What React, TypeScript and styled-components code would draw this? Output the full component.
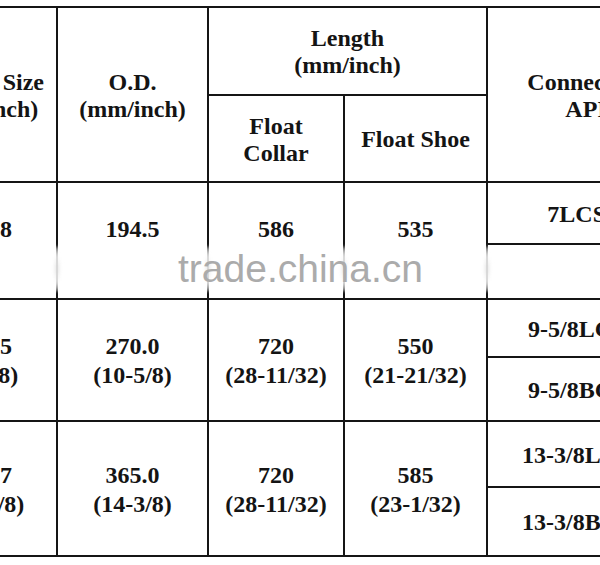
import styled, { createGlobalStyle } from "styled-components";

const GlobalStyle = createGlobalStyle`
  html, body {
    margin: 0;
    padding: 0;
    background: #ffffff;
    overflow: hidden;
  }
`;

const Page = styled.div`
  position: relative;
  width: 600px;
  height: 565px;
  overflow: hidden;
  background: #ffffff;
  padding-top: 6px;
  box-sizing: border-box;
`;

// the black background shows through the gaps as the ruled lines
const Sheet = styled.div`
  display: grid;
  grid-template-columns: 142px 149px 134px 141px 196px;
  grid-template-rows: 86px 85px 60px 53px 56px 62px 64px 67px;
  gap: 2px;
  padding: 2px;
  width: max-content;
  margin-left: -88px;
  background: #151515;
`;

const Cell = styled.div<{
  $col: number;
  $row: number;
  $colSpan?: number;
  $rowSpan?: number;
  $lift?: number;
  $leading?: number;
}>`
  grid-column: ${(p) => p.$col} / span ${(p) => p.$colSpan ?? 1};
  grid-row: ${(p) => p.$row} / span ${(p) => p.$rowSpan ?? 1};
  background: #ffffff;
  display: flex;
  flex-direction: column;
  align-items: center;
  justify-content: center;
  padding-top: 2px;
  padding-bottom: ${(p) => p.$lift ?? 0}px;
  font-family: "Liberation Serif", "Times New Roman", serif;
  font-weight: 700;
  font-size: 24px;
  line-height: ${(p) => p.$leading ?? 27}px;
  color: #141414;
  text-align: center;
  white-space: nowrap;
`;

const Watermark = styled.div`
  position: absolute;
  left: 178px;
  top: 249px;
  font-family: "Liberation Sans", Arial, sans-serif;
  font-size: 39px;
  line-height: 1;
  color: #ababab;
  pointer-events: none;
`;

const Smudge = styled.div<{ $x: number }>`
  position: absolute;
  left: ${(p) => p.$x - 6}px;
  top: 246px;
  width: 12px;
  height: 46px;
  border-radius: 50%;
  background: radial-gradient(ellipse at center, rgba(225, 225, 225, 0.95) 0%, rgba(255, 255, 255, 0.85) 45%, rgba(255, 255, 255, 0) 100%);
  filter: blur(1.5px);
`;

const rows = [
  { size: ["177.8"], od: ["194.5"], collar: ["586"], shoe: ["535"], conn: ["7LCSG", ""], lift: 24 },
  { size: ["244.5", "(9-5/8)"], od: ["270.0", "(10-5/8)"], collar: ["720", "(28-11/32)"], shoe: ["550", "(21-21/32)"], conn: ["9-5/8LCSG", "9-5/8BCSG"], lift: 0 },
  { size: ["339.7", "(13-3/8)"], od: ["365.0", "(14-3/8)"], collar: ["720", "(28-11/32)"], shoe: ["585", "(23-1/32)"], conn: ["13-3/8LCSG", "13-3/8BCSG"], lift: 0 },
];

const Lines = ({ text }: { text: string[] }) => (
  <>
    {text.map((t, i) => (
      <span key={i}>{t}</span>
    ))}
  </>
);

const App = () => {
  return (
    <Page>
      <GlobalStyle />
      <Sheet>
        <Cell $col={1} $row={1} $rowSpan={2}>
          <Lines text={["Casing Size", "(mm/inch)"]} />
        </Cell>
        <Cell $col={2} $row={1} $rowSpan={2}>
          <Lines text={["O.D.", "(mm/inch)"]} />
        </Cell>
        <Cell $col={3} $row={1} $colSpan={2}>
          <Lines text={["Length", "(mm/inch)"]} />
        </Cell>
        <Cell $col={5} $row={1} $rowSpan={2}>
          <Lines text={["Connection", "API"]} />
        </Cell>
        <Cell $col={3} $row={2}>
          <Lines text={["Float", "Collar"]} />
        </Cell>
        <Cell $col={4} $row={2}>Float Shoe</Cell>

        {rows.map((r, i) => {
          const start = 3 + i * 2;
          return [
            <Cell key={`s${i}`} $col={1} $row={start} $rowSpan={2} $lift={r.lift} $leading={29}>
              <Lines text={r.size} />
            </Cell>,
            <Cell key={`o${i}`} $col={2} $row={start} $rowSpan={2} $lift={r.lift} $leading={29}>
              <Lines text={r.od} />
            </Cell>,
            <Cell key={`c${i}`} $col={3} $row={start} $rowSpan={2} $lift={r.lift} $leading={29}>
              <Lines text={r.collar} />
            </Cell>,
            <Cell key={`f${i}`} $col={4} $row={start} $rowSpan={2} $lift={r.lift} $leading={29}>
              <Lines text={r.shoe} />
            </Cell>,
            <Cell key={`a${i}`} $col={5} $row={start}>
              {r.conn[0]}
            </Cell>,
            <Cell key={`b${i}`} $col={5} $row={start + 1}>
              {r.conn[1]}
            </Cell>,
          ];
        })}
      </Sheet>

      {[57, 208, 344, 487].map((x) => (
        <Smudge key={x} $x={x} />
      ))}
      <Watermark>trade.china.cn</Watermark>
    </Page>
  );
};

export default App;
